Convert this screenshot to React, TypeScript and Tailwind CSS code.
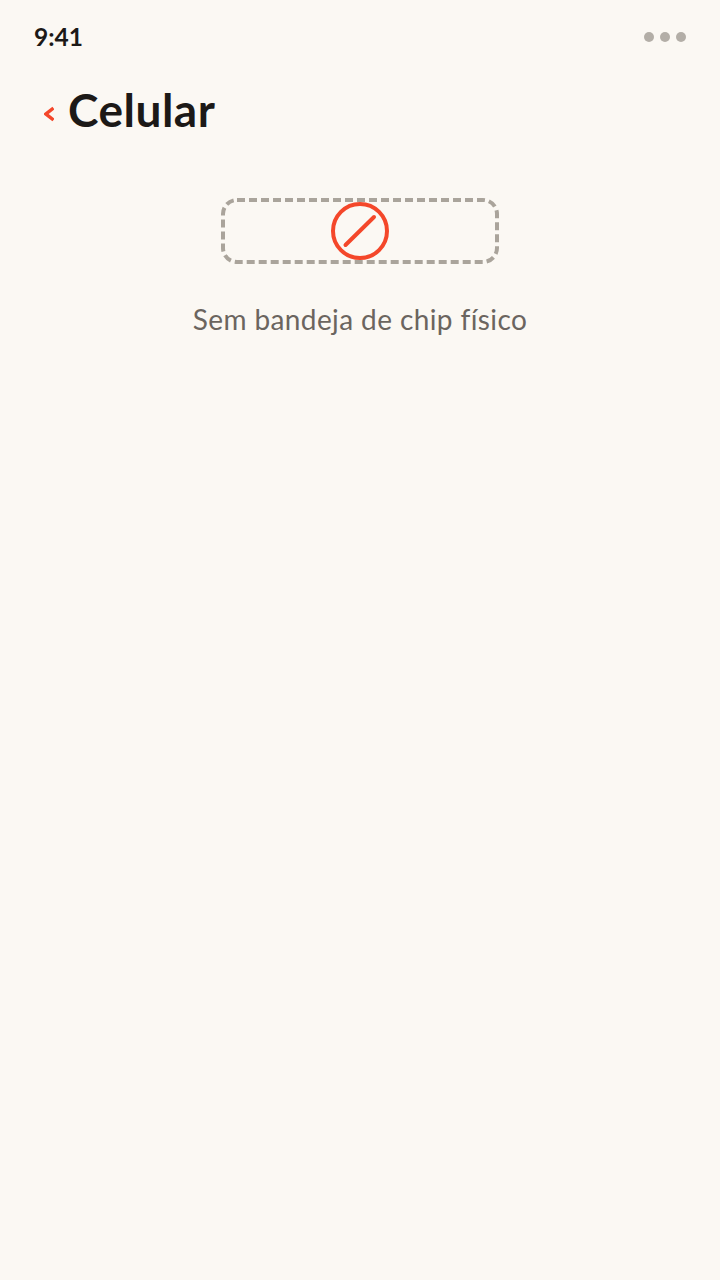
export default function App() {
  return (
    <div className="min-h-screen w-[720px] bg-[#fbf8f3] font-['Lato',sans-serif] text-[#1c1917]">
      {/* status bar */}
      <div className="flex items-center justify-between pl-[34px] pr-[34px] pt-[22px]">
        <span className="text-[24.5px] leading-[30px] font-bold">9:41</span>
        <div className="flex gap-[6px]">
          <span className="size-[10px] rounded-full bg-[#b3aea7]"></span>
          <span className="size-[10px] rounded-full bg-[#b3aea7]"></span>
          <span className="size-[10px] rounded-full bg-[#b3aea7]"></span>
        </div>
      </div>

      {/* header */}
      <div className="mt-[30px] flex items-center pl-[44px]">
        <svg width="10" height="16" viewBox="0 0 10 16" className="mt-[8px]">
          <path d="M9.500 2 L2 8 L9.500 14" fill="none" stroke="#f4472a" strokeWidth="3.5" />
        </svg>
        <h1 className="ml-[14px] text-[46px] leading-[56px] font-bold tracking-[0.5px]">Celular</h1>
      </div>

      {/* empty state */}
      <div className="mt-[58px] flex flex-col items-center">
        <svg width="280" height="70" viewBox="0 0 280 70">
          <rect x="3" y="4" width="274" height="62" rx="14" fill="none" stroke="#aaa49b" strokeWidth="4" strokeDasharray="8 4" />
          <circle cx="140" cy="35" r="27" fill="#fbf8f3" stroke="#f4472a" strokeWidth="4" />
          <path d="M125.500 49 L154 21" fill="none" stroke="#f4472a" strokeWidth="4" strokeLinecap="round" />
        </svg>
        <p className="mt-[35px] text-[28px] leading-[36px] tracking-[0.4px] text-[#6b655f]">Sem bandeja de chip físico</p>
      </div>
    </div>
  );
}
